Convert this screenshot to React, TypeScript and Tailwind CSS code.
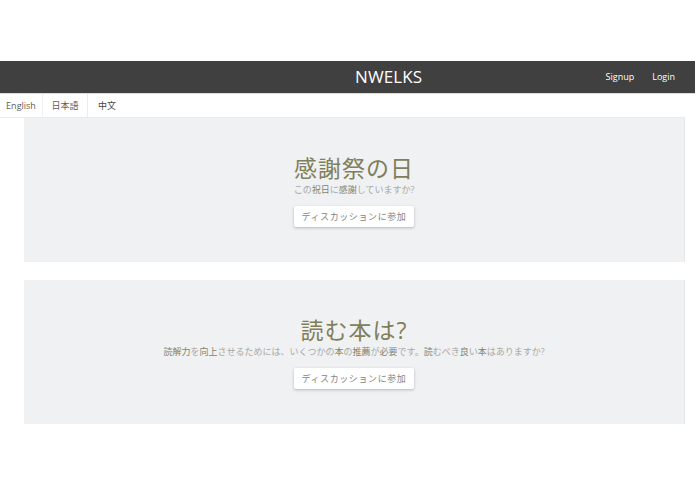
import React from "react";

type Topic = {
  title: string;
  // pieces of the lead line; kanji runs are drawn darker
  lead: { text: string; strong?: boolean }[];
};

const topics: Topic[] = [
  {
    title: "感謝祭の日",
    lead: [
      { text: "この" },
      { text: "祝日", strong: true },
      { text: "に" },
      { text: "感謝", strong: true },
      { text: "していますか?" },
    ],
  },
  {
    title: "読む本は?",
    lead: [
      { text: "読解力", strong: true },
      { text: "を" },
      { text: "向上", strong: true },
      { text: "させるためには、いくつかの" },
      { text: "本", strong: true },
      { text: "の" },
      { text: "推薦", strong: true },
      { text: "が" },
      { text: "必要", strong: true },
      { text: "です。" },
      { text: "読", strong: true },
      { text: "むべき" },
      { text: "良", strong: true },
      { text: "い" },
      { text: "本", strong: true },
      { text: "はありますか?" },
    ],
  },
];

const font = { fontFamily: '"Open Sans", "Noto Sans CJK JP", sans-serif' };

function TopicCard({ topic }: { topic: Topic }) {
  return (
    <div className="h-[144px] bg-[#f0f1f2] border-r border-[#e6e7e8] flex flex-col items-center pt-[35px]">
      <h2 className="text-[23px] leading-[30px] font-normal text-[#807f5a] tracking-[1px]">
        {topic.title}
      </h2>
      <p className="text-[9px] leading-[14px] text-[#a8a8a8]">
        {topic.lead.map((part, i) => (
          <span key={i} className={part.strong ? "text-[#84836a]" : ""}>
            {part.text}
          </span>
        ))}
      </p>
      <button className="mt-[9px] h-[21px] w-[120px] bg-white rounded-[2px] shadow-[0_1px_3px_rgba(0,0,0,0.25)] text-[9px] text-[#858585] tracking-[0.6px]">
        ディスカッションに参加
      </button>
    </div>
  );
}

export default function App() {
  return (
    <div className="w-[695px] h-[494px] bg-white" style={font}>
      <div className="h-[61px]" />

      {/* top bar */}
      <div className="h-[33px] bg-[#404040] border-b border-[#dcdcdc] flex items-center">
        <div className="w-[355px] shrink-0" />
        <div className="text-white text-[17px] tracking-[0.1px]">NWELKS</div>
        <div className="flex-1 flex justify-end gap-[18px] pr-[20px] text-[9px] text-white">
          <span>Signup</span>
          <span>Login</span>
        </div>
      </div>

      {/* language tabs */}
      <div className="h-[24px] flex border-b border-[#ebebeb] mr-[10px] text-[9px] text-[#5c5c5c]">
        <div className="w-[43px] flex items-center justify-center border-r border-[#f0f0f0]">
          English
        </div>
        <div className="w-[45px] flex items-center justify-center bg-white border-r border-[#ececec]">
          日本語
        </div>
        <div className="w-[38px] flex items-center justify-center text-[#444]">中文</div>
      </div>

      <div className="pl-[24px] pr-[10px] flex flex-col gap-[18px]">
        {topics.map((t) => (
          <TopicCard key={t.title} topic={t} />
        ))}
      </div>
    </div>
  );
}
